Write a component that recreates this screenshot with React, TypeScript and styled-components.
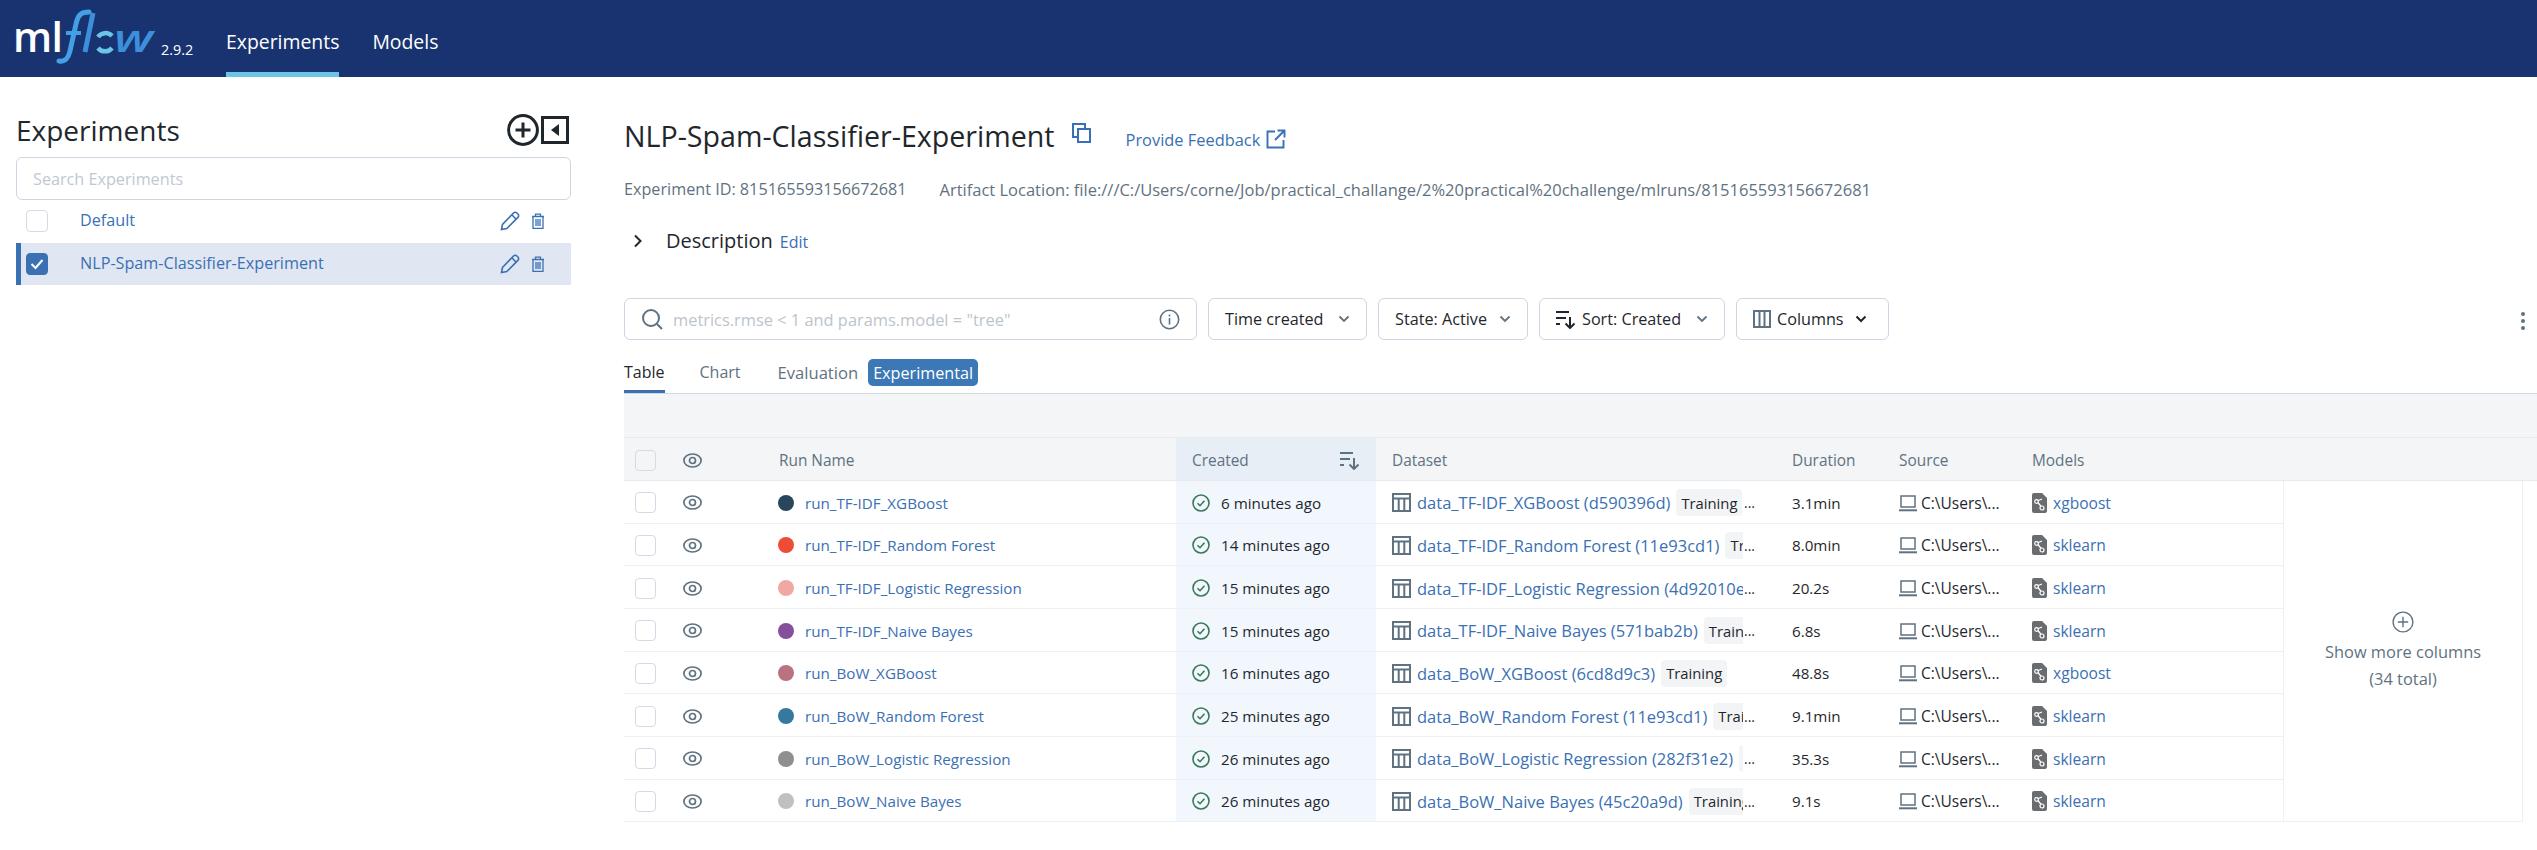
import React from 'react';
import styled, { createGlobalStyle } from 'styled-components';

const Global = createGlobalStyle`
  html, body { margin: 0; padding: 0; background: #fff; }
  body { font-family: "Open Sans", "Noto Sans", sans-serif; color: #1f272d; overflow: hidden; }
  * { box-sizing: border-box; }
`;

const Page = styled.div`width: 2537px; height: 850px; overflow: hidden; display: flex; flex-direction: column;`;
const TopBar = styled.header`height: 77px; background: #18336f; display: flex; align-items: stretch; flex: none;`;
const LogoBox = styled.div`width: 226px; flex: none;`;
const NavTab = styled.a<{ $active?: boolean }>`
  display: flex; align-items: center; height: 77px; font-size: 19.4px; color: #fff; padding-top: 10px;
  margin-right: 33px; border-bottom: 5px solid ${p => (p.$active ? '#6cc5e9' : 'transparent')};
`;
const Body = styled.div`display: flex; flex: 1; min-height: 0;`;
const Sidebar = styled.aside`width: 587px; padding: 35px 16px 0; flex: none;`;
const SideHead = styled.div`height: 36px; margin-bottom: 9px; display: flex; align-items: center; justify-content: space-between;`;
const SideTitle = styled.h1`margin: 0; font-size: 28px; line-height: 36px; font-weight: 500; color: #1f272d;`;
const SideIcons = styled.div`display: flex; align-items: center; gap: 2px; margin-right: 2px;`;
const SearchExp = styled.div`height: 43px; border: 1.5px solid #cdd6e2; border-radius: 6px; padding-left: 16px; display: flex; align-items: center; color: #c0c8d2; font-size: 16.2px;`;
const ExpRow = styled.div<{ $sel?: boolean }>`
  height: 42px; margin-bottom: 1px; display: flex; align-items: center;
  background: ${p => (p.$sel ? '#e0e7f2' : 'transparent')};
  border-left: 5px solid ${p => (p.$sel ? '#3b70b3' : 'transparent')};
  padding-left: 5px; padding-right: 26px; color: #3a70b4; font-size: 16.2px;
`;
const Check = styled.span<{ $on?: boolean; $size?: number; $bg?: string }>`
  flex: none; width: ${p => p.$size ?? 22}px; height: ${p => p.$size ?? 22}px; border-radius: 4px;
  display: inline-flex; align-items: center; justify-content: center;
  background: ${p => (p.$on ? '#3b70b3' : p.$bg ?? '#fff')}; border: 1.5px solid ${p => (p.$on ? '#3b70b3' : '#d3dce6')};
`;
const ExpName = styled.span`margin-left: 32px; flex: 1; margin-top: -2px;`;
const RowIcons = styled.span`display: flex; align-items: center; gap: 11px;`;

const Main = styled.main`flex: 1; min-width: 0; padding: 36px 0 0 37px;`;
const TitleRow = styled.div`height: 44px; display: flex; align-items: center;`;
const Title = styled.h2`margin: 0; font-size: 28.6px; font-weight: 500; color: #1f272d; white-space: nowrap;`;
const CopyWrap = styled.span`margin-left: 17px; display: flex; margin-top: -4px;`;
const FeedbackLink = styled.a`display: flex; align-items: center; gap: 6px; margin-left: 34px; margin-top: 8px; color: #3a70b4; font-size: 16.4px;`;
const MetaRow = styled.div`margin-top: 20px; height: 24px; display: flex; gap: 33px; align-items: center; font-size: 16.2px; color: #5f7281; white-space: nowrap;`;
const ArtifactText = styled.span`font-size: 16.5px;`;
const DescRow = styled.div`margin-top: 24px; height: 32px; display: flex; align-items: center; padding-left: 9px;`;
const DescLabel = styled.span`margin-left: 23px; margin-top: -2px; font-size: 20px; color: #1f272d;`;
const DescEdit = styled.a`margin-left: 7px; font-size: 16px; color: #3a70b4; margin-top: 1px;`;

const Toolbar = styled.div`margin-top: 41px; height: 42px; display: flex; gap: 11px; align-items: stretch; position: relative;`;
const SearchBar = styled.div`width: 573px; border: 1.5px solid #cdd6e2; border-radius: 6px; display: flex; align-items: center; padding: 0 16px 0 16px; color: #bcc4cc; font-size: 16.4px;`;
const SearchText = styled.span`flex: 1; margin-left: 10px;`;
const ToolButton = styled.div<{ $w: number; $pr?: number }>`
  width: ${p => p.$w}px; border: 1.5px solid #cdd6e2; border-radius: 6px; display: flex; align-items: center; justify-content: space-between;
  padding: 0 ${p => p.$pr ?? 16}px 0 16px; font-size: 16.2px; color: #1f272d; white-space: nowrap;
`;
const Label = styled.span`display: flex; align-items: center; gap: 6px;`;
const Kebab = styled.div`position: absolute; left: 1897px; top: 14px; display: flex; flex-direction: column; gap: 3px;`;
const KebabDot = styled.span`width: 4px; height: 4px; border-radius: 50%; background: #5f7281;`;

const TabRow = styled.div`height: 54px; display: flex; align-items: flex-end; border-bottom: 1px solid #cfd9e6; font-size: 16px;`;
const Tab = styled.div<{ $active?: boolean; $mr: number; $fs?: number }>`
  height: 53px; display: flex; align-items: center; padding-top: 14px; margin-right: ${p => p.$mr}px; font-size: ${p => p.$fs ?? 16}px;
  color: ${p => (p.$active ? '#1f272d' : '#5f7281')}; border-bottom: 3px solid ${p => (p.$active ? '#3b70b3' : 'transparent')};
`;
const Badge = styled.div`align-self: flex-start; margin-top: 19px; height: 27px; width: 110px; border-radius: 5px; background: #3b78b5; color: #fff; font-size: 16.2px; display: flex; align-items: center; justify-content: center; white-space: nowrap;`;
const Band = styled.div`height: 44px; background: #f3f5f7; border-bottom: 1px solid #e6eaef;`;

const COLS = '59px 95px 398px 200px 400px 107px 133px 267px';
const HeadRow = styled.div`height: 43px; background: #f3f5f7; border-bottom: 1.5px solid #e6eaef; display: grid; grid-template-columns: ${COLS}; align-items: stretch; color: #5f7281; font-size: 15.4px; font-weight: 500;`;
const Cell = styled.div<{ $pad?: number }>`display: flex; align-items: center; min-width: 0; padding-left: ${p => p.$pad ?? 16}px; padding-top: 2px; white-space: nowrap;`;
const CreatedHead = styled(Cell)`background: #e8eef5; justify-content: space-between; padding-right: 16px;`;
const RowsWrap = styled.div`display: flex; align-items: stretch;`;
const Rows = styled.div`width: 1659px; flex: none;`;
const Row = styled.div`height: 42.67px; display: grid; grid-template-columns: ${COLS}; border-bottom: 1.5px solid #edf0f4; font-size: 15.2px; color: #1f272d;`;
const CreatedCell = styled(Cell)`background: #f2f7fd; gap: 11px;`;
const Dot = styled.span<{ $c: string }>`width: 16px; height: 16px; border-radius: 50%; background: ${p => p.$c}; flex: none; margin-right: 11px;`;
const LinkText = styled.a`color: #3a70b4;`;
const Clip = styled.div`width: 351px; overflow: hidden; display: flex; align-items: center; flex: none;`;
const DataName = styled.a`color: #3a70b4; font-size: 16.5px; margin-left: 6px; margin-right: 6px; flex: none;`;
const Tag = styled.span`flex: none; background: #f2f4f6; height: 27px; border-radius: 4px; padding: 0 5px; display: flex; align-items: center; font-size: 14.8px; color: #1f272d;`;
const Dots = styled.span`color: #1f272d; font-size: 14px; margin-left: 1px;`;
const SrcText = styled.span`margin-left: 4px; color: #1f272d; font-size: 15.5px;`;
const ModelLink = styled.a`color: #3a70b4; margin-left: 6px; font-size: 15.6px;`;
const ShowMore = styled.div`width: 240px; flex: none; border-left: 1.5px solid #edf0f4; border-right: 1.5px solid #edf0f4; border-bottom: 1.5px solid #edf0f4; display: flex; flex-direction: column; align-items: center; justify-content: center; text-align: center; color: #5f7281; font-size: 16.4px; line-height: 27px;`;
const ShowMoreLine = styled.span<{ $mt?: number }>`margin-top: ${p => p.$mt ?? 0}px;`;

const ico = { fill: 'none', stroke: 'currentColor' } as const;

const Logo = () => (
  <svg width="226" height="77" viewBox="0 0 226 77" style={{ display: 'block' }}>
    <text x="13" y="52" fontFamily="Open Sans, sans-serif" fontSize="41" fontWeight="600" fill="#fff" letterSpacing="-0.5">ml</text>
    <path d="M59 61c6 1 9-2 11-10l6-27c2-9 5-12 13-12" fill="none" stroke="#43a0e4" strokeWidth="5" strokeLinecap="round" />
    <path d="M66 33h15" fill="none" stroke="#43a0e4" strokeWidth="4" />
    <path d="M93 13l-8 39" fill="none" stroke="#3d8fdc" strokeWidth="5" />
    <path d="M98 37a9 9 0 0 1 14-1" fill="none" stroke="#6cc5e9" strokeWidth="4.5" />
    <path d="M112 48a9 9 0 0 1-14 0" fill="none" stroke="#6cc5e9" strokeWidth="4.5" />
    <text x="114" y="52" fontFamily="Open Sans, sans-serif" fontSize="37" fontStyle="italic" fontWeight="600" fill="#3d8fdc" textLength="39" lengthAdjust="spacingAndGlyphs">w</text>
    <text x="161" y="55" fontFamily="Open Sans, sans-serif" fontSize="14.4" fill="#fff">2.9.2</text>
  </svg>
);
const PlusCircle = ({ s = 32, c = '#1f272d', w = 3 }: { s?: number; c?: string; w?: number }) => (
  <svg width={s} height={s} viewBox="0 0 32 32" fill="none" stroke={c} strokeWidth={w}><circle cx="16" cy="16" r="14.4" /><path d="M16 8.5v15M8.5 16h15" /></svg>
);
const Collapse = () => (
  <svg width="28" height="28" viewBox="0 0 28 28"><rect x="1.5" y="1.5" width="25" height="25" fill="none" stroke="#1f272d" strokeWidth="3" /><path d="M18 8v12l-8-6z" fill="#1f272d" /></svg>
);
const Pencil = () => (
  <svg width="20" height="20" viewBox="0 0 20 20" {...ico} stroke="#3a70b4" strokeWidth="1.6"><path d="M1.5 18.5l1-5L13.5 2c1-1 2.4-1 3.4 0l1 1c1 1 1 2.4 0 3.4L6.8 17.5z" /><path d="M12 4l4.2 4.2" /></svg>
);
const Trash = () => (
  <svg width="14" height="16" viewBox="0 0 14 16" {...ico} stroke="#3a70b4" strokeWidth="1.3"><path d="M1 3.5h12M4.5 3.5V1.2h5v2.3M2 3.5v11.8h10V3.5M5 6v7M7 6v7M9 6v7" /></svg>
);
const CheckMark = () => (
  <svg width="14" height="12" viewBox="0 0 14 12" {...ico} stroke="#fff" strokeWidth="2"><path d="M1.5 6l4 4 7-8" /></svg>
);
const CopyIcon = () => (
  <svg width="20" height="20" viewBox="0 0 20 20" {...ico} stroke="#3a70b4" strokeWidth="2"><path d="M13 5V1H1v13h5" /><rect x="6" y="6" width="12" height="13" /></svg>
);
const External = () => (
  <svg width="20" height="20" viewBox="0 0 20 20" {...ico} stroke="#3a70b4" strokeWidth="1.9"><path d="M9 2.5H1.5v16h16V11M11.5 1.5h7v7M18 2L9 11" /></svg>
);
const Chevron = () => (
  <svg width="10" height="14" viewBox="0 0 10 14" {...ico} stroke="#1f272d" strokeWidth="2"><path d="M2 1.5L7.5 7 2 12.5" /></svg>
);
const SearchIcon = () => (
  <svg width="22" height="22" viewBox="0 0 22 22" {...ico} stroke="#5f7281" strokeWidth="2"><circle cx="10" cy="10" r="8" /><path d="M16 16l5 5" /></svg>
);
const Info = () => (
  <svg width="21" height="21" viewBox="0 0 21 21" {...ico} stroke="#5f7281" strokeWidth="1.6"><circle cx="10.5" cy="10.5" r="9.2" /><path d="M10.5 9v6.5M10.5 5.5v2" /></svg>
);
const Caret = ({ c = '#5f7281', w = 1.8 }: { c?: string; w?: number }) => (
  <svg width="12" height="8" viewBox="0 0 12 8" {...ico} stroke={c} strokeWidth={w}><path d="M1.5 1.5L6 6l4.5-4.5" /></svg>
);
const SortIcon = ({ c = '#1f272d' }: { c?: string }) => (
  <svg width="20" height="19" viewBox="0 0 20 19" {...ico} stroke={c} strokeWidth="2"><path d="M0 2h13M0 8h10M0 14h4M14 7v11M9.5 13.5L14 18l4.5-4.5" /></svg>
);
const ColsIcon = () => (
  <svg width="18" height="18" viewBox="0 0 18 18" {...ico} stroke="#5f7281" strokeWidth="2"><rect x="1" y="1" width="16" height="16" /><path d="M6.5 1v16M11.5 1v16" /></svg>
);
const EyeWide = () => (
  <svg width="19" height="15" viewBox="0 0 19 15" {...ico} stroke="#5f7281" strokeWidth="1.7"><ellipse cx="9.5" cy="7.5" rx="8.6" ry="6.5" /><circle cx="9.5" cy="7.5" r="3" /></svg>
);
const StatusOk = () => (
  <svg width="18" height="18" viewBox="0 0 18 18" {...ico} stroke="#3b7a57" strokeWidth="1.6" style={{ flex: 'none' }}><circle cx="9" cy="9" r="8" /><path d="M5.5 9.2l2.5 2.5 4.5-5" /></svg>
);
const TableIcon = () => (
  <svg width="19" height="19" viewBox="0 0 19 19" {...ico} stroke="#5f7281" strokeWidth="2" style={{ flex: 'none' }}><rect x="1" y="1" width="17" height="17" /><path d="M1 5.5h17M6.7 5.5V18M12.3 5.5V18" /></svg>
);
const Laptop = () => (
  <svg width="18" height="18" viewBox="0 0 18 18" {...ico} stroke="#5f7281" strokeWidth="1.5" style={{ flex: 'none' }}><rect x="2" y="2" width="14" height="11" /><path d="M0 16.3h18" strokeWidth="2" /></svg>
);
const ModelIcon = () => (
  <svg width="15" height="20" viewBox="0 0 15 20" style={{ flex: 'none' }}>
    <path d="M2 0h8l5 5v13a2 2 0 0 1-2 2H2a2 2 0 0 1-2-2V2a2 2 0 0 1 2-2z" fill="#6a6d70" />
    <path d="M5 8l5-2M5.5 9l4 5" stroke="#fff" strokeWidth="1.3" />
    <circle cx="4.5" cy="8.5" r="1.8" fill="#6a6d70" stroke="#fff" strokeWidth="1.2" />
    <circle cx="10" cy="15" r="2" fill="#6a6d70" stroke="#fff" strokeWidth="1.2" />
  </svg>
);

type Run = { name: string; color: string; time: string; data: string; dots: boolean; dur: string; model: string };
const runs: Run[] = [
  { name: 'run_TF-IDF_XGBoost', color: '#29475c', time: '6 minutes ago', data: 'data_TF-IDF_XGBoost (d590396d)', dots: true, dur: '3.1min', model: 'xgboost' },
  { name: 'run_TF-IDF_Random Forest', color: '#ef4c35', time: '14 minutes ago', data: 'data_TF-IDF_Random Forest (11e93cd1)', dots: true, dur: '8.0min', model: 'sklearn' },
  { name: 'run_TF-IDF_Logistic Regression', color: '#f2a8a2', time: '15 minutes ago', data: 'data_TF-IDF_Logistic Regression (4d92010e)', dots: true, dur: '20.2s', model: 'sklearn' },
  { name: 'run_TF-IDF_Naive Bayes', color: '#85509b', time: '15 minutes ago', data: 'data_TF-IDF_Naive Bayes (571bab2b)', dots: true, dur: '6.8s', model: 'sklearn' },
  { name: 'run_BoW_XGBoost', color: '#b87281', time: '16 minutes ago', data: 'data_BoW_XGBoost (6cd8d9c3)', dots: false, dur: '48.8s', model: 'xgboost' },
  { name: 'run_BoW_Random Forest', color: '#35799f', time: '25 minutes ago', data: 'data_BoW_Random Forest (11e93cd1)', dots: true, dur: '9.1min', model: 'sklearn' },
  { name: 'run_BoW_Logistic Regression', color: '#8f8f8f', time: '26 minutes ago', data: 'data_BoW_Logistic Regression (282f31e2)', dots: true, dur: '35.3s', model: 'sklearn' },
  { name: 'run_BoW_Naive Bayes', color: '#c0c0c0', time: '26 minutes ago', data: 'data_BoW_Naive Bayes (45c20a9d)', dots: true, dur: '9.1s', model: 'sklearn' },
];

export default function App() {
  return (
    <Page>
      <Global />
      <TopBar>
        <LogoBox><Logo /></LogoBox>
        <NavTab $active>Experiments</NavTab>
        <NavTab>Models</NavTab>
      </TopBar>
      <Body>
        <Sidebar>
          <SideHead>
            <SideTitle>Experiments</SideTitle>
            <SideIcons><PlusCircle /><Collapse /></SideIcons>
          </SideHead>
          <SearchExp>Search Experiments</SearchExp>
          <ExpRow>
            <Check />
            <ExpName>Default</ExpName>
            <RowIcons><Pencil /><Trash /></RowIcons>
          </ExpRow>
          <ExpRow $sel>
            <Check $on><CheckMark /></Check>
            <ExpName>NLP-Spam-Classifier-Experiment</ExpName>
            <RowIcons><Pencil /><Trash /></RowIcons>
          </ExpRow>
        </Sidebar>
        <Main>
          <TitleRow>
            <Title>NLP-Spam-Classifier-Experiment</Title>
            <CopyWrap><CopyIcon /></CopyWrap>
            <FeedbackLink>Provide Feedback <External /></FeedbackLink>
          </TitleRow>
          <MetaRow>
            <span>Experiment ID: 815165593156672681</span>
            <ArtifactText>Artifact Location: file:///C:/Users/corne/Job/practical_challange/2%20practical%20challenge/mlruns/815165593156672681</ArtifactText>
          </MetaRow>
          <DescRow>
            <Chevron />
            <DescLabel>Description</DescLabel>
            <DescEdit>Edit</DescEdit>
          </DescRow>
          <Toolbar>
            <SearchBar>
              <SearchIcon />
              <SearchText>metrics.rmse &lt; 1 and params.model = "tree"</SearchText>
              <Info />
            </SearchBar>
            <ToolButton $w={159}>Time created <Caret /></ToolButton>
            <ToolButton $w={150}>State: Active <Caret /></ToolButton>
            <ToolButton $w={186}><Label><SortIcon /> Sort: Created</Label> <Caret /></ToolButton>
            <ToolButton $w={153} $pr={21}><Label><ColsIcon /> Columns</Label> <Caret c="#1f272d" w={2} /></ToolButton>
            <Kebab><KebabDot /><KebabDot /><KebabDot /></Kebab>
          </Toolbar>
          <TabRow>
            <Tab $active $mr={35}>Table</Tab>
            <Tab $mr={37}>Chart</Tab>
            <Tab $mr={10} $fs={16.6}>Evaluation</Tab>
            <Badge>Experimental</Badge>
          </TabRow>
          <Band />
          <HeadRow>
            <Cell $pad={11}><Check $size={21} $bg="#f3f5f7" /></Cell>
            <Cell $pad={0}><EyeWide /></Cell>
            <Cell $pad={1}>Run Name</Cell>
            <CreatedHead>Created <SortIcon c="#5f7281" /></CreatedHead>
            <Cell>Dataset</Cell>
            <Cell>Duration</Cell>
            <Cell>Source</Cell>
            <Cell>Models</Cell>
          </HeadRow>
          <RowsWrap>
            <Rows>
              {runs.map(r => (
                <Row key={r.name}>
                  <Cell $pad={11}><Check $size={21} /></Cell>
                  <Cell $pad={0}><EyeWide /></Cell>
                  <Cell $pad={0}><Dot $c={r.color} /><LinkText>{r.name}</LinkText></Cell>
                  <CreatedCell><StatusOk />{r.time}</CreatedCell>
                  <Cell>
                    <Clip>
                      <TableIcon />
                      <DataName>{r.data}</DataName>
                      <Tag>Training</Tag>
                    </Clip>
                    {r.dots && <Dots>...</Dots>}
                  </Cell>
                  <Cell>{r.dur}</Cell>
                  <Cell><Laptop /><SrcText>C:\Users\...</SrcText></Cell>
                  <Cell><ModelIcon /><ModelLink>{r.model}</ModelLink></Cell>
                </Row>
              ))}
            </Rows>
            <ShowMore>
              <PlusCircle s={22} c="#5f7281" w={2} />
              <ShowMoreLine $mt={5}>Show more columns</ShowMoreLine>
              <ShowMoreLine>(34 total)</ShowMoreLine>
            </ShowMore>
          </RowsWrap>
        </Main>
      </Body>
    </Page>
  );
}
